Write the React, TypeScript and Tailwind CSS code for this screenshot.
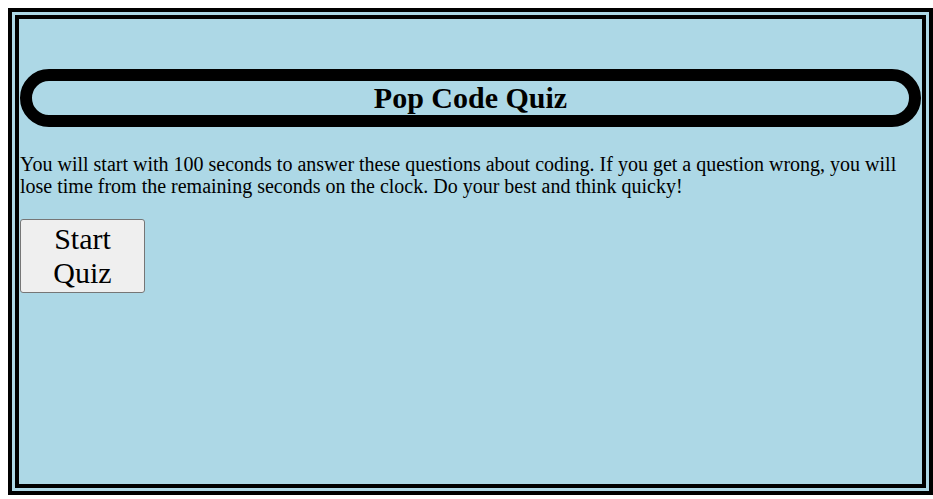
export default function App() {
  return (
    <div className="min-h-[499px] bg-white pt-2 pl-2" style={{ fontFamily: '"Liberation Serif", "Times New Roman", serif' }}>
      {/* outer frame */}
      <div className="w-[925px] h-[487px] border-4 border-black bg-[#add8e6] p-[3px] flex">
        <div className="flex-1 border-4 border-black p-[1px] text-black">
          <h1 className="mt-[49px] h-[58px] rounded-full border-[12px] border-black text-center text-[30px] font-bold leading-[34px]">
            Pop Code Quiz
          </h1>
          <p className="mt-[26px] text-[20px] leading-[22px]">
            You will start with 100 seconds to answer these questions about coding. If you get a question wrong, you will
            lose time from the remaining seconds on the clock. Do your best and think quicky!
          </p>
          <button className="mt-[22px] w-[125px] h-[74px] rounded-[3px] border border-[#767676] bg-[#efefef] px-[6px] text-[30px] leading-[34px]">
            Start Quiz
          </button>
        </div>
      </div>
    </div>
  );
}
